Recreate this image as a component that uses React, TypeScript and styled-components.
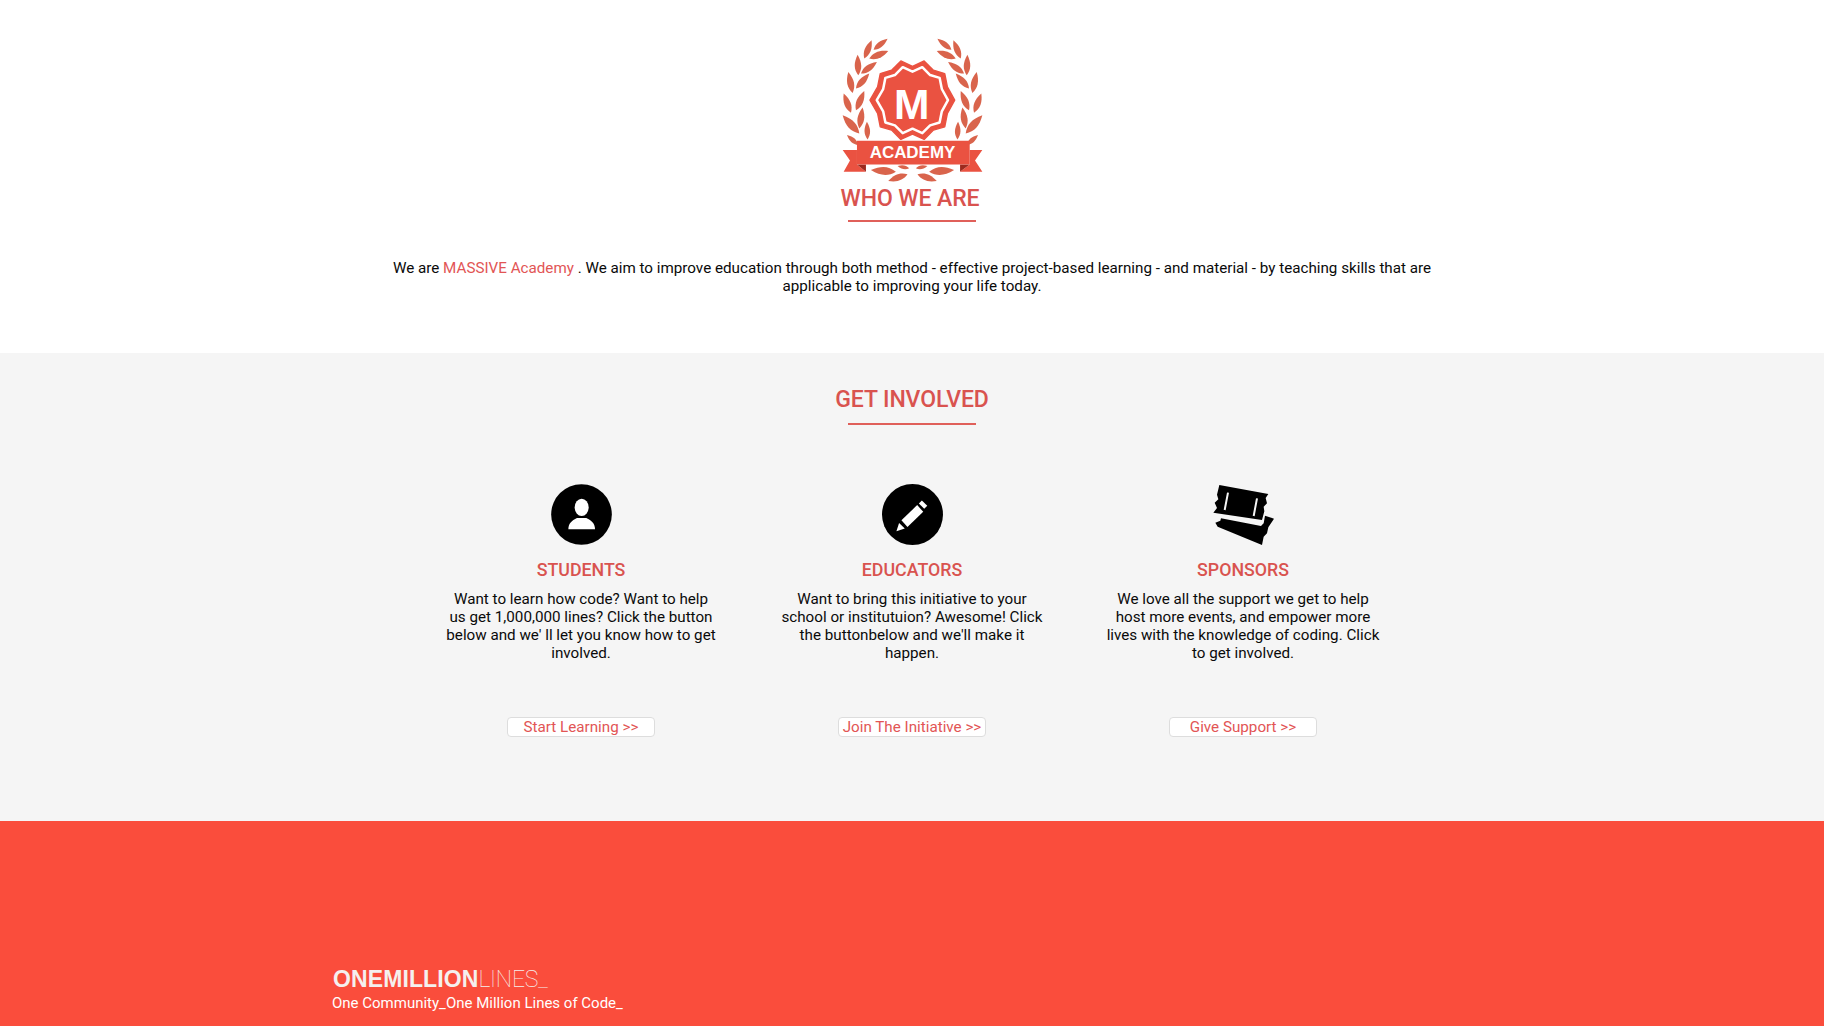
import React from 'react';
import styled, { createGlobalStyle } from 'styled-components';

const GlobalStyle = createGlobalStyle`
  html, body {
    margin: 0;
    padding: 0;
    background: #fff;
    overflow: hidden;
  }
  body {
    font-family: Roboto, "Liberation Sans", sans-serif;
    font-size: 15.2px;
    color: #0a0a0a;
  }
`;

const LEAF = '#d9644c';
const BADGE = '#ea5241';

// base x, base y, tip x, tip y
const leaves: [number, number, number, number][] = [
  [218, 88, 260, 55],
  [190, 115, 212, 60],
  [205, 115, 262, 92],
  [172, 165, 170, 103],
  [180, 160, 228, 125],
  [155, 218, 142, 155],
  [165, 205, 205, 160],
  [150, 278, 128, 220],
  [165, 270, 190, 212],
  [175, 340, 125, 285],
  [175, 325, 185, 262],
  [200, 358, 198, 305],
  [172, 375, 138, 345],
  [285, 455, 210, 450],
  [320, 463, 262, 483],
  [325, 445, 290, 438],
];

const Leaf = ({ from, to }: { from: [number, number]; to: [number, number] }) => {
  const dx = to[0] - from[0];
  const dy = to[1] - from[1];
  const l = Math.hypot(dx, dy);
  const a = (Math.atan2(dx, -dy) * 180) / Math.PI;
  const w = l * 0.21;
  return (
    <path
      transform={`translate(${from[0]} ${from[1]}) rotate(${a})`}
      d={`M0 0 C${-w} ${-l * 0.3} ${-w} ${-l * 0.6} 0 ${-l} C${w} ${-l * 0.6} ${w} ${-l * 0.3} 0 0Z`}
      fill={LEAF}
    />
  );
};

const Branch = () => (
  <>
    {leaves.map(([x, y, tx, ty], i) => (
      <Leaf key={i} from={[x, y]} to={[tx, ty]} />
    ))}
  </>
);

const BADGE_PATH =
  'M300 122L335 138L370 122L398 150L432 160L440 200L462 240L440 280L432 320L398 330L370 358L335 342L300 358L272 330L238 320L230 280L207 240L230 200L238 160L272 150Z';

const Crest = () => (
  <LogoSvg viewBox="120 50 430 445">
    <Branch />
    <g transform="translate(670 0) scale(-1 1)">
      <Branch />
    </g>
    <path d={BADGE_PATH} fill={BADGE} stroke={BADGE} strokeWidth="4" strokeLinejoin="round" />
    <g transform="translate(335 240) scale(0.84) translate(-335 -240)">
      <path d={BADGE_PATH} fill={BADGE} stroke="#fff" strokeWidth="9" strokeLinejoin="round" />
    </g>
    <text x="333" y="296" textAnchor="middle" fontFamily="'Liberation Sans', sans-serif" fontWeight="700" fontSize="128" fill="#fff">
      M
    </text>
    <path d="M168 390H125L147 421L128 455H195L168 433Z" fill={BADGE} />
    <path d="M507 390H545L523 421L545 455H478L507 433Z" fill={BADGE} />
    <path d="M168 433H195V455Z" fill="#9c2a1e" />
    <path d="M507 433H478V455Z" fill="#9c2a1e" />
    <path d="M168 362H507V433H168Z" fill={BADGE} />
    <text x="335" y="415" textAnchor="middle" fontFamily="'Liberation Sans', sans-serif" fontWeight="700" fontSize="51" fill="#fff">
      ACADEMY
    </text>
  </LogoSvg>
);

const StudentIcon = () => (
  <IconSvg viewBox="0 0 183 183">
    <circle cx="91.5" cy="91.5" r="91" fill="#000" />
    <ellipse cx="92" cy="70" rx="21" ry="26" fill="#fff" />
    <path d="M52 136C52 118 62 110 78 102L106 102C122 110 132 118 132 136Z" fill="#fff" />
  </IconSvg>
);

const EducatorIcon = () => (
  <IconSvg viewBox="35 27 182 182">
    <circle cx="126" cy="118" r="91" fill="#000" />
    <path d="M93 135L140 90L158 110L111 155Z" fill="#fff" />
    <path d="M145 85L154 76L170 92L161 101Z" fill="#fff" />
    <path d="M78 168L86 143L103 160Z" fill="#fff" />
  </IconSvg>
);

const SponsorIcon = () => (
  <IconSvg viewBox="96 42 183 183">
    <path
      d="M115 45L262 72L254 84L258 100L248 110L250 124L243 150L97 128L108 114L101 98L112 88L108 74Z"
      fill="#000"
    />
    <path d="M141 68L131 120M228 85L218 138" stroke="#f5f5f5" strokeWidth="6" />
    <path
      d="M120 145L240 168L248 160L252 137L279 146L270 160L262 172L258 190L248 200L243 225L110 170L103 158L118 152Z"
      fill="#000"
    />
  </IconSvg>
);

const columns = [
  {
    title: 'STUDENTS',
    icon: <StudentIcon />,
    text: "Want to learn how code? Want to help us get 1,000,000 lines? Click the button below and we' ll let you know how to get involved.",
    action: 'Start Learning >>',
  },
  {
    title: 'EDUCATORS',
    icon: <EducatorIcon />,
    text: "Want to bring this initiative to your school or institutuion? Awesome! Click the buttonbelow and we'll make it happen.",
    action: 'Join The Initiative >>',
  },
  {
    title: 'SPONSORS',
    icon: <SponsorIcon />,
    text: 'We love all the support we get to help host more events, and empower more lives with the knowledge of coding. Click to get involved.',
    action: 'Give Support >>',
  },
];

export default function App() {
  return (
    <Page>
      <GlobalStyle />
      <WhoSection>
        <Crest />
        <Heading $compact>WHO WE ARE</Heading>
        <Intro>
          We are <Highlight href="#">MASSIVE Academy</Highlight> . We aim to improve education through both method -
          effective project-based learning - and material - by teaching skills that are applicable to improving your
          life today.
        </Intro>
      </WhoSection>
      <InvolvedSection>
        <Heading>GET INVOLVED</Heading>
        <Columns>
          {columns.map((c) => (
            <Column key={c.title}>
              {c.icon}
              <ColumnTitle>{c.title}</ColumnTitle>
              <ColumnText>{c.text}</ColumnText>
              <ActionButton href="#">{c.action}</ActionButton>
            </Column>
          ))}
        </Columns>
      </InvolvedSection>
      <Footer>
        <Brand>
          ONEMILLION<BrandLight>LINES_</BrandLight>
        </Brand>
        <Tagline>One Community_One Million Lines of Code_</Tagline>
      </Footer>
    </Page>
  );
}

const Page = styled.div`
  width: 1824px;
  height: 1026px;
  overflow: hidden;
`;

const LogoSvg = styled.svg`
  display: block;
  width: 143px;
  height: 148px;
`;

const IconSvg = styled.svg`
  display: block;
  width: 61px;
  height: 61px;
`;

const WhoSection = styled.section`
  display: flex;
  flex-direction: column;
  align-items: center;
  height: 353px;
  box-sizing: border-box;
  padding-top: 37px;
  background: #fff;
`;

const Heading = styled.h2<{ $compact?: boolean }>`
  width: 128px;
  margin: 0;
  height: ${(p) => (p.$compact ? '37px' : '38px')};
  padding-right: ${(p) => (p.$compact ? '4px' : '0')};
  box-sizing: ${(p) => (p.$compact ? 'border-box' : 'content-box')};
  color: #d9534f;
  font-size: 23px;
  font-weight: 500;
  letter-spacing: -0.1px;
  line-height: ${(p) => (p.$compact ? '28px' : '29px')};
  white-space: nowrap;
  display: flex;
  justify-content: center;
  border-bottom: 2px solid #e0605a;
`;

const Intro = styled.p`
  width: 1060px;
  margin: 37px 0 0;
  font-size: 15.2px;
  line-height: 18px;
  text-align: center;
`;

const Highlight = styled.a`
  color: #e25555;
  text-decoration: none;
`;

const InvolvedSection = styled.section`
  display: flex;
  flex-direction: column;
  align-items: center;
  height: 468px;
  box-sizing: border-box;
  padding-top: 32px;
  background: #f5f5f5;
`;

const Columns = styled.div`
  display: grid;
  grid-template-columns: repeat(3, 331px);
  margin-top: 59px;
`;

const Column = styled.div`
  display: flex;
  flex-direction: column;
  align-items: center;
`;

const ColumnTitle = styled.h3`
  margin: 14px 0 0;
  color: #d9534f;
  font-size: 17.8px;
  font-weight: 500;
  line-height: 22px;
`;

const ColumnText = styled.p`
  width: 273px;
  height: 72px;
  margin: 9px 0 0;
  font-size: 15.2px;
  line-height: 18px;
  text-align: center;
`;

const ActionButton = styled.a`
  display: block;
  width: 148px;
  height: 20px;
  box-sizing: border-box;
  margin-top: 55px;
  border: 1px solid #ddd;
  border-radius: 4px;
  background: #fff;
  color: #e25555;
  font-size: 15.2px;
  line-height: 18px;
  text-align: center;
  text-decoration: none;
  white-space: nowrap;
`;

const Footer = styled.footer`
  height: 205px;
  box-sizing: border-box;
  padding: 145px 0 0 332px;
  background: #fa4d3c;
  color: #fff;
`;

const Brand = styled.div`
  margin-left: 1px;
  color: #f5f0ee;
  font-family: "Liberation Sans", sans-serif;
  font-size: 23px;
  font-weight: 700;
  letter-spacing: 0.1px;
  line-height: 26px;
`;

const BrandLight = styled.span`
  font-family: Roboto, sans-serif;
  font-weight: 100;
  letter-spacing: -0.2px;
`;

const Tagline = styled.div`
  margin-top: 1px;
  font-size: 15px;
  line-height: 18px;
`;
